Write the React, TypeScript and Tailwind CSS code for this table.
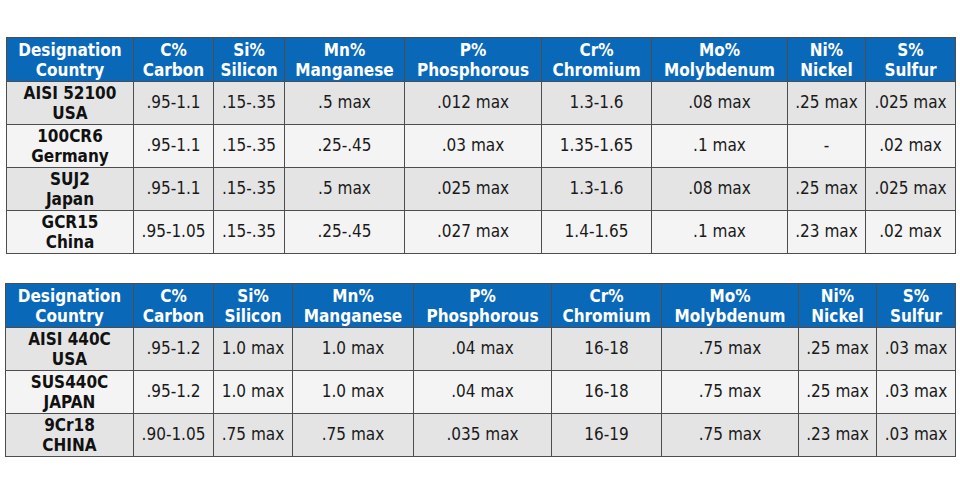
import React from "react";

type Table = {
  cols: number[];
  rows: { name: [string, string]; vals: string[] }[];
};

const heads: [string, string][] = [
  ["Designation", "Country"],
  ["C%", "Carbon"],
  ["Si%", "Silicon"],
  ["Mn%", "Manganese"],
  ["P%", "Phosphorous"],
  ["Cr%", "Chromium"],
  ["Mo%", "Molybdenum"],
  ["Ni%", "Nickel"],
  ["S%", "Sulfur"],
];

const tables: Table[] = [
  {
    cols: [127, 80, 71, 120, 137, 110, 136, 78, 90],
    rows: [
      { name: ["AISI 52100", "USA"], vals: [".95-1.1", ".15-.35", ".5 max", ".012 max", "1.3-1.6", ".08 max", ".25 max", ".025 max"] },
      { name: ["100CR6", "Germany"], vals: [".95-1.1", ".15-.35", ".25-.45", ".03 max", "1.35-1.65", ".1 max", "-", ".02 max"] },
      { name: ["SUJ2", "Japan"], vals: [".95-1.1", ".15-.35", ".5 max", ".025 max", "1.3-1.6", ".08 max", ".25 max", ".025 max"] },
      { name: ["GCR15", "China"], vals: [".95-1.05", ".15-.35", ".25-.45", ".027 max", "1.4-1.65", ".1 max", ".23 max", ".02 max"] },
    ],
  },
  {
    cols: [128, 80, 79, 121, 138, 110, 137, 78, 79],
    rows: [
      { name: ["AISI 440C", "USA"], vals: [".95-1.2", "1.0 max", "1.0 max", ".04 max", "16-18", ".75 max", ".25 max", ".03 max"] },
      { name: ["SUS440C", "JAPAN"], vals: [".95-1.2", "1.0 max", "1.0 max", ".04 max", "16-18", ".75 max", ".25 max", ".03 max"] },
      { name: ["9Cr18", "CHINA"], vals: [".90-1.05", ".75 max", ".75 max", ".035 max", "16-19", ".75 max", ".23 max", ".03 max"] },
    ],
  },
];

function SteelTable({ t, className }: { t: Table; className: string }) {
  return (
    <table className={"table-fixed border-collapse " + className}>
      <colgroup>
        {t.cols.map((w, i) => (
          <col key={i} style={{ width: w }} />
        ))}
      </colgroup>
      <thead>
        <tr className="h-[44px] bg-[#0a68b9]">
          {heads.map(([a, b], i) => (
            <th key={i} className="border border-[#4d4d4d] p-0 pt-[1px] text-center align-middle text-[17px] font-bold leading-[20px] text-white">
              {a}
              <br />
              {b}
            </th>
          ))}
        </tr>
      </thead>
      <tbody>
        {t.rows.map((r, ri) => (
          <tr key={ri} className={"h-[43px] " + (ri % 2 === 0 ? "bg-[#e4e4e4]" : "bg-[#f4f4f4]")}>
            <td className="border border-[#4d4d4d] p-0 text-center align-middle text-[17px] font-bold leading-[20px] text-[#111]">
              {r.name[0]}
              <br />
              {r.name[1]}
            </td>
            {r.vals.map((v, vi) => (
              <td key={vi} className="whitespace-nowrap border border-[#4d4d4d] p-0 text-center align-middle text-[17px] text-[#1a1a1a]">
                {v}
              </td>
            ))}
          </tr>
        ))}
      </tbody>
    </table>
  );
}

export default function App() {
  return (
    <div
      className="h-[500px] w-[960px] bg-white pt-[37px] font-stretch-condensed"
      style={{ fontFamily: "'DejaVu Sans Condensed', 'DejaVu Sans', Verdana, sans-serif" }}
    >
      <SteelTable t={tables[0]} className="ml-[6px]" />
      <SteelTable t={tables[1]} className="ml-[5px] mt-[29px]" />
    </div>
  );
}
